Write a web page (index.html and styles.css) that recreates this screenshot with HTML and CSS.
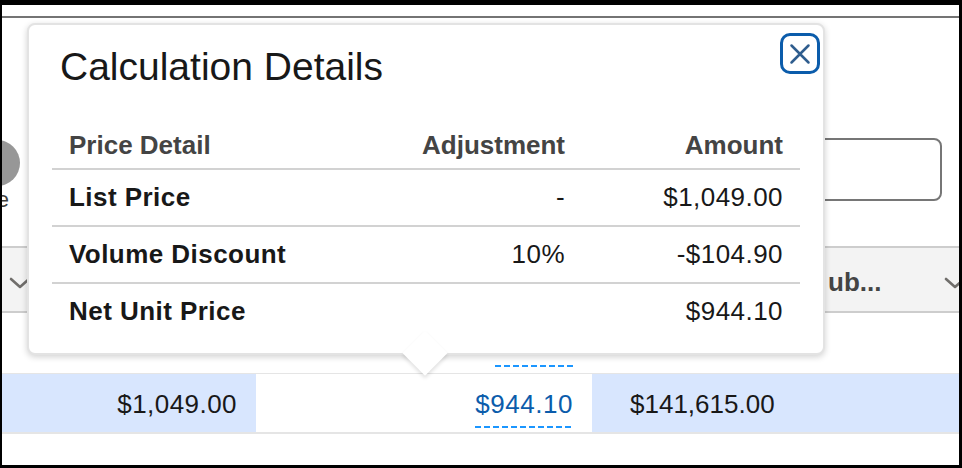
FILE: index.html
```html
<!DOCTYPE html>
<html lang="en">
<head>
<meta charset="utf-8">
<title>Calculation Details</title>
<link rel="stylesheet" href="styles.css">
</head>
<body>
<div class="frame">
  <div class="topbar"></div>
  <div class="upper">
    <div class="step">
      <div class="step-dot"></div>
      <div class="step-label">Price</div>
    </div>
    <div class="field"></div>
  </div>
  <div class="thead">
    <svg class="chev chev-left" width="22" height="12" viewBox="0 0 22 12"><polyline points="2,2 11,10 20,2" fill="none" stroke="#706e6b" stroke-width="2.6" stroke-linecap="round" stroke-linejoin="round"/></svg>
    <span class="th-label">ub...</span>
    <svg class="chev chev-right" width="22" height="12" viewBox="0 0 22 12"><polyline points="2,2 11,10 20,2" fill="none" stroke="#706e6b" stroke-width="2.6" stroke-linecap="round" stroke-linejoin="round"/></svg>
  </div>
  <div class="blank-row">
    <div class="dash-top"></div>
  </div>
  <div class="data-row">
    <div class="cell cell-list">$1,049.00</div>
    <div class="cell cell-net"><span class="net-link">$944.10</span></div>
    <div class="cell cell-total">$141,615.00</div>
  </div>

  <div class="popover">
    <h2 class="pop-title">Calculation Details</h2>
    <div class="close">
      <svg width="22" height="22" viewBox="0 0 22 22"><path d="M2.5 2.5 L19.5 19.5 M19.5 2.5 L2.5 19.5" fill="none" stroke="#2f5d8e" stroke-width="2.5" stroke-linecap="round"/></svg>
    </div>
    <table class="calc">
      <colgroup><col class="c1"><col class="c2"><col class="c3"></colgroup>
      <thead>
        <tr><th>Price Detail</th><th class="num">Adjustment</th><th class="num">Amount</th></tr>
      </thead>
      <tbody>
        <tr><td class="label">List Price</td><td class="num">-</td><td class="num">$1,049.00</td></tr>
        <tr><td class="label">Volume Discount</td><td class="num">10%</td><td class="num">-$104.90</td></tr>
        <tr><td class="label">Net Unit Price</td><td class="num"></td><td class="num">$944.10</td></tr>
      </tbody>
    </table>
    <div class="nubbin"></div>
  </div>
</div>
</body>
</html>
```

FILE: styles.css
```css
html, body {
  margin: 0;
  padding: 0;
  background: #000;
}
body {
  font-family: "Liberation Sans", Arial, sans-serif;
  height: 468px;
  overflow: hidden;
}
.frame {
  position: relative;
  margin: 5px 3px 0 2px;
  height: 460px;
  background: #fff;
  overflow: hidden;
}
.topbar {
  height: 11px;
  border-bottom: 2px solid #747474;
}
.upper {
  height: 228px;
  display: flex;
  justify-content: space-between;
  align-items: flex-start;
}
.step {
  width: 46px;
  margin-left: -28px;
  margin-top: 122px;
}
.step-dot {
  width: 46px;
  height: 46px;
  border-radius: 50%;
  background: #979797;
}
.step-label {
  width: 100px;
  margin-left: -65px;
  margin-top: 1px;
  text-align: right;
  font-size: 22px;
  line-height: 26px;
  color: #3e3e3c;
}
.field {
  width: 400px;
  height: 63px;
  box-sizing: border-box;
  margin-top: 120px;
  margin-right: 17px;
  border: 2px solid #767676;
  border-radius: 8px;
}
.thead {
  height: 63px;
  border-top: 2px solid #cdcdcd;
  border-bottom: 2px solid #cdcdcd;
  background: #f3f3f3;
  display: flex;
  align-items: flex-start;
}
.chev {
  flex: none;
  margin-top: 29px;
}
.chev-left {
  margin-left: 7px;
}
.th-label {
  width: 56px;
  margin-left: 797px;
  margin-top: 20px;
  font-size: 26px;
  line-height: 29px;
  font-weight: 700;
  color: #444;
  white-space: nowrap;
}
.chev-right {
  margin-left: 63px;
}
.blank-row {
  height: 8px;
  padding-top: 52px;
}
.dash-top {
  margin-left: 493px;
  width: 78px;
  height: 2px;
  background: repeating-linear-gradient(90deg, #1b96ff 0 6px, transparent 6px 9px);
}
.data-row {
  height: 58px;
  border-top: 1px solid #e5e5e5;
  border-bottom: 2px solid #e5e5e5;
  display: flex;
  font-size: 26px;
  line-height: 29px;
  color: #181818;
}
.cell {
  box-sizing: border-box;
  padding-top: 16px;
}
.cell-list {
  width: 254px;
  background: #d8e6fe;
  text-align: right;
  padding-right: 19px;
  letter-spacing: 0.45px;
}
.cell-net {
  width: 336px;
  background: #fff;
  display: flex;
  justify-content: flex-end;
  align-items: flex-start;
  padding-right: 19px;
}
.net-link {
  color: #0b5cab;
  letter-spacing: 0.55px;
  padding-bottom: 9px;
  background: repeating-linear-gradient(90deg, #1b96ff 0 6px, transparent 6px 9px) left bottom / 100% 2px no-repeat;
}
.cell-total {
  flex: 1;
  background: #d8e6fe;
  padding-left: 38px;
}
.popover {
  position: absolute;
  left: 25px;
  top: 18px;
  width: 798px;
  box-sizing: border-box;
  background: #fff;
  border: 2px solid #e3e3e3;
  border-radius: 8px;
  padding: 18px 23px 14px;
  box-shadow: 0 2px 6px rgba(0, 0, 0, 0.18);
}
.pop-title {
  margin: 0 0 32px 8px;
  font-size: 39px;
  line-height: 48px;
  font-weight: 400;
  color: #181818;
}
.close {
  position: absolute;
  top: 8px;
  right: 3px;
  width: 40px;
  height: 41px;
  box-sizing: border-box;
  border: 3px solid #0b5cab;
  border-radius: 10px;
  background: #fff;
  display: flex;
  align-items: center;
  justify-content: center;
}
.calc {
  width: 748px;
  table-layout: fixed;
  border-collapse: separate;
  border-spacing: 0;
}
.calc .c1 { width: 312px; }
.calc .c2 { width: 218px; }
.calc .c3 { width: 218px; }
.calc th {
  font-size: 26px;
  line-height: 29px;
  font-weight: 700;
  color: #444;
  text-align: left;
  padding: 8px 17px;
  border-bottom: 2px solid #d2d2d2;
}
.calc td {
  font-size: 26px;
  line-height: 29px;
  color: #181818;
  padding: 13px 17px;
  border-bottom: 2px solid #d2d2d2;
  letter-spacing: 0.45px;
}
.calc tbody tr:last-child td {
  border-bottom: 0;
}
.calc .num {
  text-align: right;
}
.calc td.label {
  font-weight: 700;
}
.nubbin {
  position: absolute;
  left: 380px;
  top: 312px;
  width: 32px;
  height: 32px;
  background: #fff;
  transform: rotate(45deg);
  box-shadow: 2px 2px 4px rgba(0, 0, 0, 0.12);
}
```
